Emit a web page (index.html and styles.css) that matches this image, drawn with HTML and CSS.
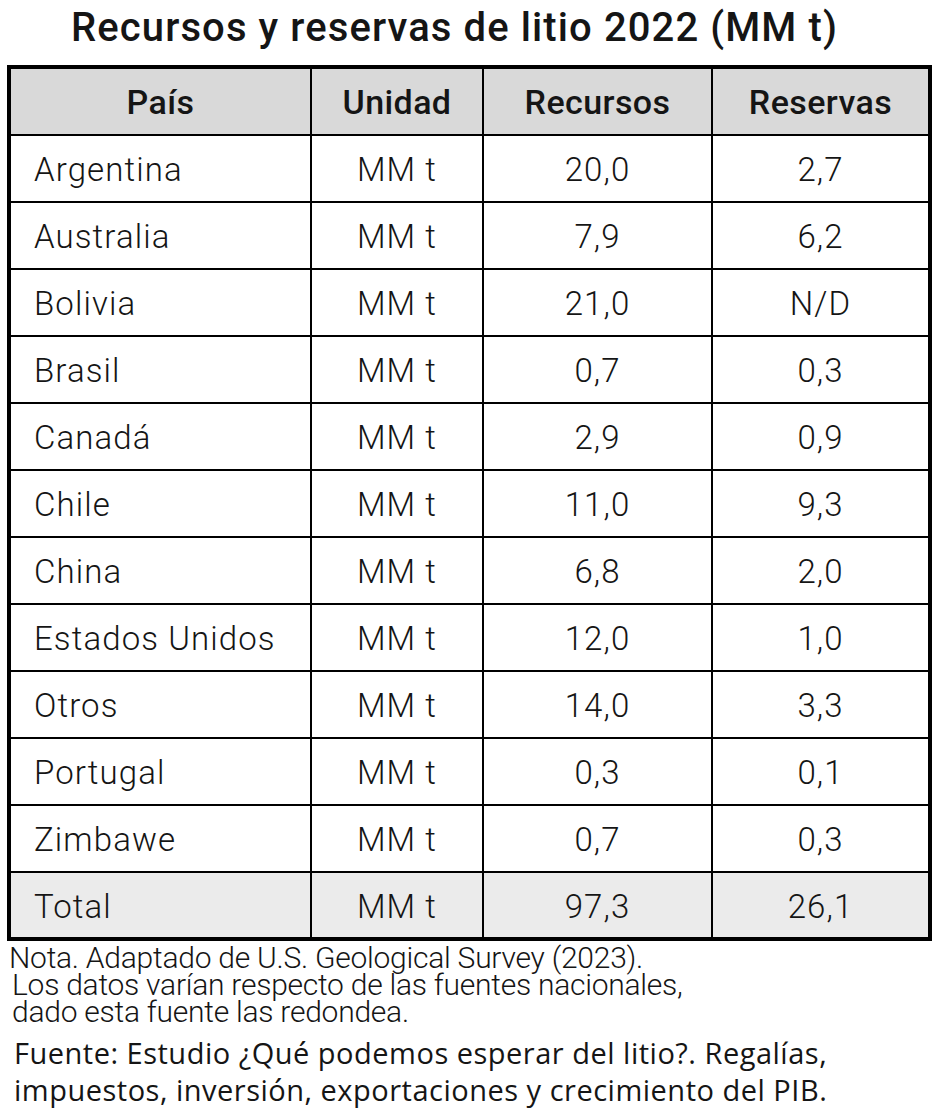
FILE: index.html
```html
<!DOCTYPE html>
<html lang="es">
<head>
<meta charset="utf-8">
<title>Recursos y reservas de litio 2022</title>
<link rel="stylesheet" href="styles.css">
</head>
<body>
<h1 class="title">Recursos y reservas de litio 2022 (MM t)</h1>
<table class="data">
  <colgroup>
    <col class="c1"><col class="c2"><col class="c3"><col class="c4">
  </colgroup>
  <thead>
    <tr><th>País</th><th>Unidad</th><th>Recursos</th><th>Reservas</th></tr>
  </thead>
  <tbody>
    <tr><td class="country">Argentina</td><td>MM t</td><td>20,0</td><td>2,7</td></tr>
    <tr><td class="country">Australia</td><td>MM t</td><td>7,9</td><td>6,2</td></tr>
    <tr><td class="country">Bolivia</td><td>MM t</td><td>21,0</td><td>N/D</td></tr>
    <tr><td class="country">Brasil</td><td>MM t</td><td>0,7</td><td>0,3</td></tr>
    <tr><td class="country">Canadá</td><td>MM t</td><td>2,9</td><td>0,9</td></tr>
    <tr><td class="country">Chile</td><td>MM t</td><td>11,0</td><td>9,3</td></tr>
    <tr><td class="country">China</td><td>MM t</td><td>6,8</td><td>2,0</td></tr>
    <tr><td class="country">Estados Unidos</td><td>MM t</td><td>12,0</td><td>1,0</td></tr>
    <tr><td class="country">Otros</td><td>MM t</td><td>14,0</td><td>3,3</td></tr>
    <tr><td class="country">Portugal</td><td>MM t</td><td>0,3</td><td>0,1</td></tr>
    <tr><td class="country">Zimbawe</td><td>MM t</td><td>0,7</td><td>0,3</td></tr>
    <tr class="total"><td class="country">Total</td><td>MM t</td><td>97,3</td><td>26,1</td></tr>
  </tbody>
</table>
<div class="note">
  <p class="note-line">Nota. Adaptado de U.S. Geological Survey (2023).</p>
  <p class="note-line indent">Los datos varían respecto de las fuentes nacionales,</p>
  <p class="note-line indent">dado esta fuente las redondea.</p>
</div>
<div class="source">
  <p class="source-line">Fuente: Estudio ¿Qué podemos esperar del litio?. Regalías,</p>
  <p class="source-line">impuestos, inversión, exportaciones y crecimiento del PIB.</p>
</div>
</body>
</html>
```
FILE: styles.css
```css
html, body {
  margin: 0;
  padding: 0;
  background: #ffffff;
}
body {
  color: #151515;
  font-family: Roboto, "Liberation Sans", sans-serif;
}
.title {
  margin: 4px 0 0 0;
  padding-right: 38px;
  font-size: 40px;
  line-height: 48px;
  font-weight: 500;
  text-align: center;
  letter-spacing: 1.1px;
}
.data {
  margin: 13px 0 0 7px;
  width: 925px;
  table-layout: fixed;
  border-collapse: collapse;
  border: 4px solid #000;
}
.c1 { width: 302px; }
.c2 { width: 172px; }
.c3 { width: 229px; }
.c4 { width: 218px; }
.data th, .data td {
  border: 2px solid #000;
  padding: 0;
  text-align: center;
  font-size: 33px;
  letter-spacing: 1.1px;
}
.data th {
  background: #d9d9d9;
  font-weight: 500;
  font-size: 34px;
  letter-spacing: 0.4px;
  height: 65px;
}
.data td {
  font-weight: 300;
  height: 63px;
  padding-top: 2px;
}
.data td.country {
  text-align: left;
  padding-left: 23px;
}
.data tr.total td {
  background: #ebebeb;
  height: 62px;
}
.note {
  margin: 3px 0 0 0;
}
.note-line {
  margin: 0;
  padding-left: 9px;
  font-size: 30px;
  line-height: 27px;
  font-weight: 300;
  letter-spacing: -0.25px;
}
.note-line.indent {
  padding-left: 12px;
}
.source {
  margin: 9px 0 0 0;
}
.source-line {
  margin: 0;
  padding-left: 14px;
  font-family: "Open Sans", "Noto Sans", sans-serif;
  font-size: 29px;
  line-height: 37px;
  letter-spacing: 0.5px;
}
```
